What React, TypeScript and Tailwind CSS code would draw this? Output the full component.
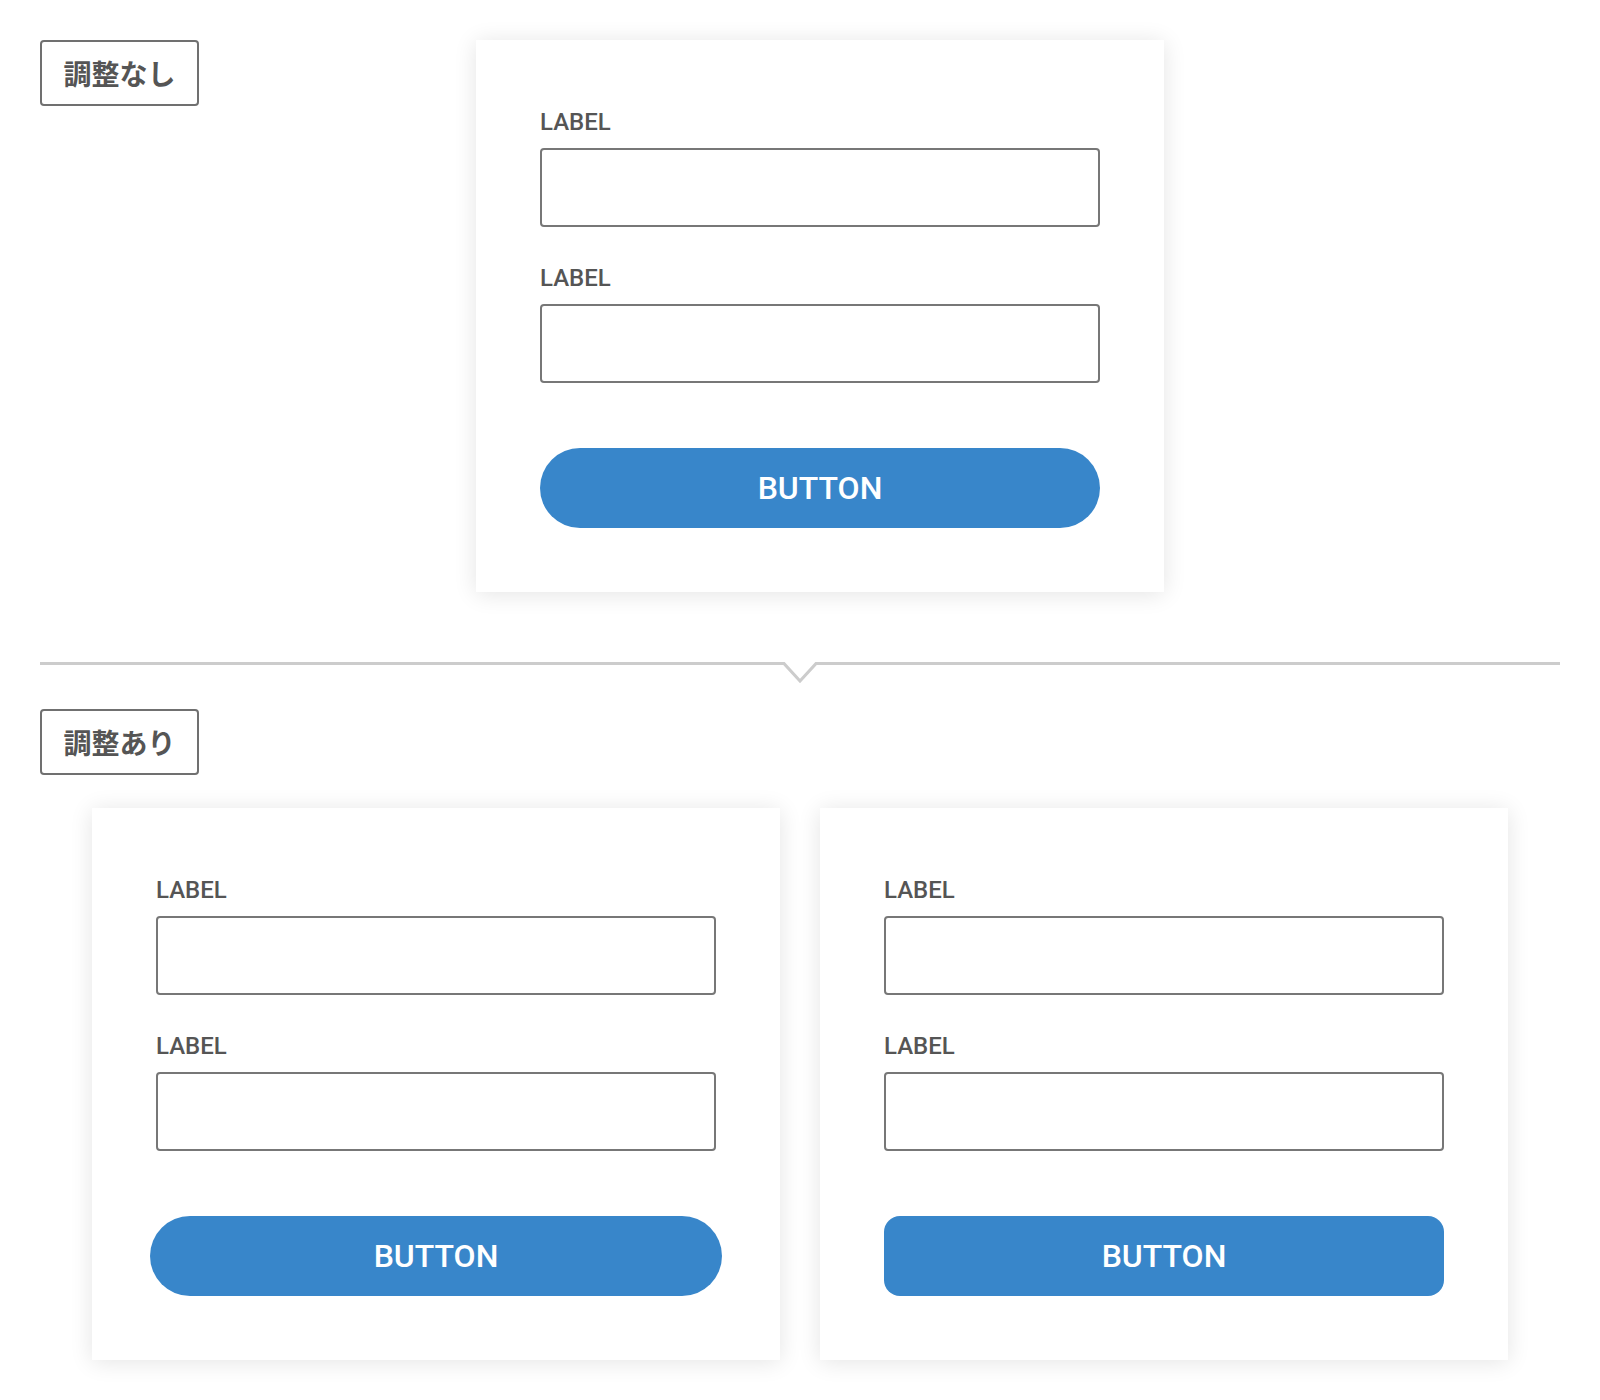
import React from "react";

const jp = "font-['Noto_Sans_CJK_JP','Noto_Sans',sans-serif]";
const latin = "font-['Roboto','Noto_Sans_CJK_JP',sans-serif]";

function Tag({ children }: { children: React.ReactNode }) {
  return (
    <div
      className={`${jp} flex h-[66px] w-[159px] items-center justify-center rounded-[4px] border-2 border-[#707070] text-[28px] font-bold leading-none text-[#555555]`}
    >
      {children}
    </div>
  );
}

function Field({ first }: { first?: boolean }) {
  return (
    <div className={first ? "" : "mt-[33px]"}>
      <div className={`${latin} mb-2 text-[24px] font-medium leading-[36px] text-[#555555]`}>LABEL</div>
      <div className="h-[79px] rounded-[4px] border-2 border-[#777777] bg-white" />
    </div>
  );
}

type ButtonShape = "pill" | "pill-wide" | "rounded";

function FormCard({ button }: { button: ButtonShape }) {
  const shape =
    button === "pill"
      ? "rounded-full w-full"
      : button === "pill-wide"
        ? "rounded-full mx-[-6px] w-[calc(100%+12px)]"
        : "rounded-[16px] w-full";
  return (
    <div className="w-[688px] bg-white px-16 pb-16 pt-16 shadow-[0_2px_22px_rgba(0,0,0,0.11)]">
      <Field first />
      <Field />
      <button
        type="button"
        className={`${latin} ${shape} mt-[65px] flex h-20 items-center justify-center bg-[#3886CA] text-[32px] font-medium text-white`}
      >
        BUTTON
      </button>
    </div>
  );
}

function Divider() {
  return (
    <div className="flex items-start">
      <div className="h-[3px] flex-1 bg-[#cccccc]" />
      <svg width="34" height="22" viewBox="0 0 34 22" className="block shrink-0">
        <polyline
          points="-1,1.5 1,1.5 17,19 33,1.5 35,1.5"
          fill="none"
          stroke="#cccccc"
          strokeWidth="3"
          strokeLinejoin="miter"
        />
      </svg>
      <div className="h-[3px] flex-1 bg-[#cccccc]" />
    </div>
  );
}

export default function App() {
  return (
    <div className="min-h-[1400px] w-[1600px] bg-white pl-10 pt-10">
      <div className="grid grid-cols-[1fr_688px_1fr] items-start">
        <Tag>調整なし</Tag>
        <FormCard button="pill" />
        <div />
      </div>

      <div className="mr-10 mt-[70px]">
        <Divider />
      </div>

      <div className="mr-10 mt-[25px]">
        <Tag>調整あり</Tag>
        <div className="mt-[33px] flex justify-center gap-10">
          <FormCard button="pill-wide" />
          <FormCard button="rounded" />
        </div>
      </div>
    </div>
  );
}
